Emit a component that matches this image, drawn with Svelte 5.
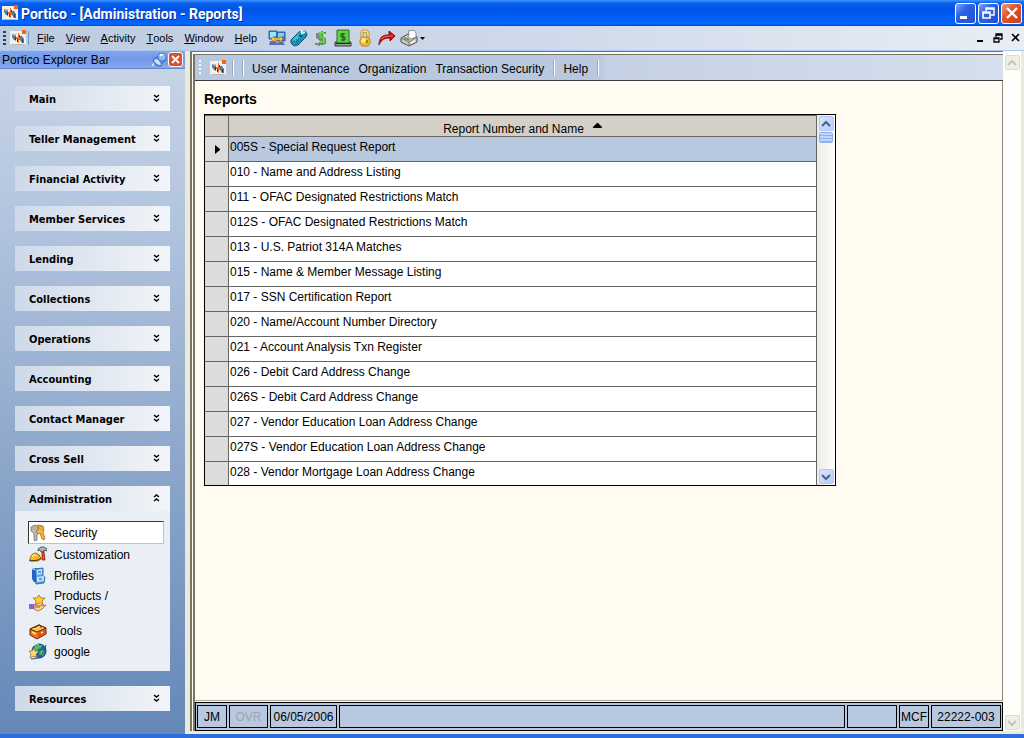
<script>
  const menus = ['File', 'View', 'Activity', 'Tools', 'Window', 'Help'];
  const topGroups = ['Main', 'Teller Management', 'Financial Activity', 'Member Services', 'Lending', 'Collections', 'Operations', 'Accounting', 'Contact Manager', 'Cross Sell'];
  const adminItems = [
    ['keys', 'Security'],
    ['hammer', 'Customization'],
    ['cabinet', 'Profiles'],
    ['star', 'Products / Services'],
    ['toolbox', 'Tools'],
    ['globe', 'google']
  ];
  const reports = [
    '005S - Special Request Report',
    '010 - Name and Address Listing',
    '011 - OFAC Designated Restrictions Match',
    '012S - OFAC Designated Restrictions Match',
    '013 - U.S. Patriot 314A Matches',
    '015 - Name & Member Message Listing',
    '017 - SSN Certification Report',
    '020 - Name/Account Number Directory',
    '021 - Account Analysis Txn Register',
    '026 - Debit Card Address Change',
    '026S - Debit Card Address Change',
    '027 - Vendor Education Loan Address Change',
    '027S - Vendor Education Loan Address Change',
    '028 - Vendor Mortgage Loan Address Change'
  ];
  const tools = ['network', 'phone', 'dollar', 'cash', 'lock', 'arrow', 'printer'];
  let selected = $state(0);
</script>

{#snippet logo()}
  <svg class="logo" width="16" height="16" viewBox="0 0 16 16" aria-hidden="true">
    <path d="M0 1h12v3h4v11H0z" fill="#f1f0ec" />
    <path d="M1 14h14v1H1z" fill="#b4b8bd" />
    <path d="M2 4h3l1 2v4H4L2 7z" fill="#5a7890" />
    <path d="M2 4h3v2H3z" fill="#9db0bf" />
    <path d="M10 6h2l2 3v4h-2l-2-3z" fill="#5a7890" />
    <path d="M5 7l1 1v3L5 10zM12 9l1 1v3l-1-1z" fill="#25333d" />
    <path d="M8 3h1v4h1v3H9v3H8v-2H7V9H6V7h2z" fill="#f2651a" />
    <path d="M7 9h1v3H7zM9 5h1v2H9z" fill="#3d332d" />
    <path d="M12 0h4v4h-4z" fill="#ff6308" />
  </svg>
{/snippet}

{#snippet icon(name)}
  <svg width="18" height="18" viewBox="0 0 18 18" aria-hidden="true">
    {#if name === 'network'}
      <path d="M1 2h8v8H1z" fill="#3d86d4" stroke="#31618f" />
      <path d="M2 3h6v4l-6 2z" fill="#9be4fa" />
      <path d="M9 3h8v9H9z" fill="#2f7bd0" stroke="#31618f" />
      <path d="M10 4h6v3l-6 2z" fill="#7fd2f6" />
      <path d="M2 12h6l2 4H1zM10 13h5l2 3H9z" fill="#6469a8" />
      <path d="M3 10l3-3v2h6V7l3 3-3 3v-2H6v2z" fill="#fcc53b" stroke="#b77c12" stroke-width=".6" />
    {:else if name === 'phone'}
      <path d="M1 11L8 4l3-3 1 2 3-1 2 3-1 3-8 8-4 1-3-3z" fill="#1694bd" stroke="#085677" />
      <path d="M2 11l7-7 4 2-8 7z" fill="#3fbcdc" />
      <path d="M8 7l2-2 3 2-2 2z" fill="#0b617f" />
      <path d="M11 1l1 3 3-1" fill="none" stroke="#e9f6fb" stroke-width="2" />
      <path d="M4 12h1M6 13h1M6 11h1M8 12h1M8 10h1" stroke="#053d55" />
    {:else if name === 'dollar'}
      <path d="M4 4h5v4l3 3v5H8v1H6v-1H3v-2h5v-2L4 9z" fill="#7b8a7e" />
      <path d="M13 5V4H8v3l4 2 1 1v4H7M10 2v14" fill="none" stroke="#3cab35" stroke-width="2" />
      <path d="M12 4H8v3l4 3v3H8" fill="none" stroke="#78de5b" stroke-width="1.300" />
    {:else if name === 'cash'}
      <path d="M1 13h16v4H1z" fill="#9b9f9b" stroke="#363936" />
      <path d="M3 1h12v13H3z" fill="#5fd241" stroke="#286e20" />
      <path d="M2 14.500h14" stroke="#1c2b1a" />
      <path d="M11 5H7v3h4v3H7M9 4v8" fill="none" stroke="#174811" />
    {:else if name === 'lock'}
      <path d="M6 9V4q0-2 3-2t3 3v4" fill="none" stroke="#b98a24" stroke-width="3" />
      <path d="M6 9V4q0-2 3-2t3 3v4" fill="none" stroke="#ffe18a" stroke-width="1.400" />
      <path d="M6 8h6l2 3v3l-2 3H6l-2-3v-3z" fill="#eebc35" stroke="#b78220" />
      <path d="M6 9h3l1 2-2 3-3-1z" fill="#ffe98f" />
      <path d="M10 11h2v3h-2z" fill="#b37f1c" />
    {:else if name === 'arrow'}
      <path d="M1 16q0-11 10-10V2l6 5-5 5V9Q4 8 1 16z" fill="#d40b10" stroke="#8b0d0d" />
      <path d="M3 10q3-3 9-3l3 0" fill="none" stroke="#ff6a5c" />
      <path d="M1 16v-3" stroke="#737373" />
    {:else if name === 'printer'}
      <path d="M1 9l7-4 9 3v5l-8 4-8-4z" fill="#c9c9c5" stroke="#4e4e4d" />
      <path d="M1 9l8 4 8-5M9 13v4" fill="none" stroke="#777" />
      <path d="M8 2l6-1 2 3 0 4-5 2-3-2 1-3z" fill="#fff" stroke="#777" stroke-width=".8" />
      <path d="M4 9l3 1" stroke="#3ea640" stroke-width="1.500" />
      <path d="M7 10l2 1" stroke="#d34b3a" stroke-width="1.500" />
      <path d="M11 14l4-2" fill="none" stroke="#f7f7f3" stroke-width="1.500" />
    {:else if name === 'keys'}
      <path d="M2 3l4-2 3 1-1 5 1 2-1 1v6l-2 1-1-1V9L2 7z" fill="#bdbdb8" stroke="#6b6c6e" stroke-width=".8" />
      <path d="M4 3h2v2H4z" fill="#fff" stroke="#666" stroke-width=".5" />
      <path d="M9 1l5 1 1 4-1 3 2 5-1 2-2-1-2-6-2 1-2-3 3-2z" fill="#f7b638" stroke="#a16b12" stroke-width=".8" />
      <path d="M11 3h2v2h-2z" fill="#fff3c4" stroke="#a16b12" stroke-width=".5" />
    {:else if name === 'hammer'}
      <path d="M9 3l3-2h3l3 2v2l-3-1v2h-3l-1-2-2 1z" fill="#a9b4bb" stroke="#3a4248" stroke-width=".8" />
      <path d="M13 6h2l1 8h-3z" fill="#e1501b" stroke="#8f250b" stroke-width=".8" />
      <path d="M1 13q1-6 6-6 4 1 5 6l-3 2H2z" fill="#f9b925" stroke="#8c5609" stroke-width=".8" />
      <path d="M0 14l2 1 7-1 3-2" stroke="#4a2d02" fill="none" />
      <path d="M3 11q1-2 4-2" stroke="#ffe483" fill="none" stroke-width="1.400" />
    {:else if name === 'cabinet'}
      <path d="M3 2l4-1 3 1v14l-5-1-2-3z" fill="#1f65c2" />
      <path d="M6 2l8-1v8l2 1-1 6-8 1z" fill="#609fe3" stroke="#2258a2" stroke-width=".8" />
      <path d="M8 3l5-1v5l-5 1zM8 10l7-1v5l-7 1z" fill="#bee0fb" />
      <path d="M9 5h3M10 12h3" stroke="#205796" />
      <path d="M3 2l4 1" stroke="#8cc6fa" />
    {:else if name === 'star'}
      <path d="M10 1l2 3h4l-3 3 1 4-4-2-4 2 1-4-3-3h4z" fill="#ffcb36" stroke="#a46e17" stroke-width=".8" />
      <path d="M0 10h5v5H0z" fill="#8a62d4" />
      <path d="M5 11l4 0 2 1 6-1-4 4-4 2-4-2z" fill="#ffd69b" stroke="#a05c18" stroke-width=".8" />
      <path d="M6 13h5" stroke="#9b5a1d" />
    {:else if name === 'toolbox'}
      <path d="M1 7l9-4 7 3v6l-9 5-7-4z" fill="#e6781a" stroke="#6b2607" />
      <path d="M1 7l9-4 7 3-9 4z" fill="#ffc64a" stroke="#6b2607" />
      <path d="M6 6V5l4-2 2 1v2" fill="none" stroke="#5c3414" />
      <path d="M9 11l7-4v5l-7 4z" fill="#e54e1c" />
      <path d="M3 10l4 2M12 11l2-1" stroke="#ffe194" stroke-width="1.500" />
    {:else}
      <circle cx="10" cy="8" r="7" fill="#1569b7" stroke="#123d69" />
      <path d="M8 2h5l-1 3-3 1-2 4-3-2 2-5zM12 7l4 1-2 5-4-2z" fill="#54bd4d" />
      <path d="M5 3q2-2 5-2" stroke="#85e0fd" fill="none" />
      <path d="M5 5l1 3h4l-3 3 1 4-3-2-4 2 1-4-2-3h3z" fill="#ffd97a" stroke="#95672b" stroke-width=".7" />
      <path d="M2 16q12 1 15-14" fill="none" stroke="#3a4d86" />
    {/if}
  </svg>
{/snippet}

{#snippet chevrons(up)}
  <svg width="7" height="8" viewBox="0 0 7 8" aria-hidden="true">
    <path d={up ? 'M1 3l2.500-2 2.500 2M1 7l2.500-2 2.500 2' : 'M1 1l2.500 2 2.500-2M1 5l2.500 2 2.500-2'} fill="none" stroke="#000" stroke-width="1.400" />
  </svg>
{/snippet}

{#snippet arrowhead(up)}
  <svg width="10" height="8" viewBox="0 0 10 8" aria-hidden="true">
    <path d={up ? 'M1 6l4-4 4 4' : 'M1 2l4 4 4-4'} fill="none" stroke="currentColor" stroke-width="2" />
  </svg>
{/snippet}

{#snippet groupHead(name, open)}
  <button class="group-head" aria-expanded={open}>
    <span>{name}</span>
    {@render chevrons(open)}
  </button>
{/snippet}

<div class="window">
  <header class="titlebar">
    {@render logo()}
    <h1>Portico - [Administration - Reports]</h1>
    <div class="window-buttons">
      <button aria-label="Minimize"><svg width="19" height="19" viewBox="0 0 19 19"><path d="M4 12h7v3H4z" fill="#fff" /></svg></button>
      <button aria-label="Restore"><svg width="19" height="19" viewBox="0 0 19 19"><path d="M7 7V4h8v7h-3M7 5h8" fill="none" stroke="#fff" stroke-width="1.400" /><path d="M4 8h7v6H4zM4 9h7" fill="none" stroke="#fff" stroke-width="1.600" /></svg></button>
      <button class="close" aria-label="Close"><svg width="19" height="19" viewBox="0 0 19 19"><path d="M5 4l10 10M15 4L5 14" stroke="#fff" stroke-width="2.400" /></svg></button>
    </div>
  </header>

  <nav class="menubar" aria-label="Menu">
    <span class="grip"></span>
    {@render logo()}
    <span class="divider"></span>
    <div class="menus">
      {#each menus as menu}
        <button><u>{menu[0]}</u>{menu.slice(1)}</button>
      {/each}
    </div>
    <div class="tools">
      {#each tools as tool}
        <button aria-label={tool}>{@render icon(tool)}</button>
      {/each}
      <svg class="more" width="5" height="3" viewBox="0 0 5 3"><path d="M0 0h5L2.500 3z" /></svg>
    </div>
    <div class="child-buttons">
      <button aria-label="Minimize document"><svg width="10" height="10" viewBox="0 0 10 10"><path d="M2 7h6v2H2z" /></svg></button>
      <button aria-label="Restore document"><svg width="10" height="10" viewBox="0 0 10 10"><path d="M3 4V1h6v5H7M3 2h6M1 5h5v4H1zM1 5.500h5" fill="none" stroke="#000" stroke-width="1.300" /></svg></button>
      <button aria-label="Close document"><svg width="10" height="10" viewBox="0 0 10 10"><path d="M1 1l7 7M8 1L1 8" stroke="#000" stroke-width="1.600" /></svg></button>
    </div>
  </nav>

  <div class="body">
    <aside class="explorer">
      <div class="explorer-title">
        <span>Portico Explorer Bar</span>
        <button aria-label="Pin">
          <svg width="16" height="16" viewBox="0 0 16 16">
            <path d="M1 14l4-5" stroke="#dfeaff" stroke-width="1.500" />
            <path d="M2 8q2-4 5-3l2-3 5 1 1 5-4 3-1 3q-6 1-8-6z" fill="#5c8fdc" stroke="#2e5faa" stroke-width=".7" />
            <path d="M3 8q3-2 5 1t2 4q-5 0-7-5z" fill="#cfe3fb" />
            <ellipse cx="11" cy="5" rx="4" ry="4" fill="#8dbaf3" stroke="#3b6cb6" stroke-width=".7" />
            <path d="M9 4q1-2 3-1" stroke="#fff" fill="none" stroke-width="1.800" />
          </svg>
        </button>
        <button class="panel-close" aria-label="Close panel"><svg width="11" height="11" viewBox="0 0 11 11"><path d="M2 2l7 7M9 2L2 9" stroke="#fff" stroke-width="2" /></svg></button>
      </div>
      <div class="groups">
        {#each topGroups as group}
          {@render groupHead(group, false)}
        {/each}
        <section>
          {@render groupHead('Administration', true)}
          <nav class="items" aria-label="Administration">
            {#each adminItems as [glyph, label], i}
              <a href="#{glyph}" class:current={i === 0}>
                {@render icon(glyph)}
                <span>{label}</span>
              </a>
            {/each}
          </nav>
        </section>
        {@render groupHead('Resources', false)}
      </div>
    </aside>

    <div class="workspace">
      <div class="document">
        <nav class="toolbar" aria-label="Administration menu">
          <span class="grip light"></span>
          {@render logo()}
          <span class="divider light"></span>
          <span class="divider light"></span>
          <button>User Maintenance</button>
          <button>Organization</button>
          <button>Transaction Security</button>
          <span class="divider light"></span>
          <button>Help</button>
          <span class="divider light"></span>
        </nav>
        <main>
          <h2>Reports</h2>
          <div class="grid">
            <table>
              <thead>
                <tr>
                  <th class="marker" aria-label="Current row"></th>
                  <th>Report Number and Name<svg width="9" height="5" viewBox="0 0 9 5"><path d="M4 0h1l4 4v1H0V4z" /></svg></th>
                </tr>
              </thead>
              <tbody>
                {#each reports as report, i}
                  <tr class:selected={i === selected} onclick={() => (selected = i)}>
                    <td class="marker">{#if i === selected}<svg width="5" height="9" viewBox="0 0 5 9"><path d="M0 0l5 4v1L0 9z" /></svg>{/if}</td>
                    <td>{report}</td>
                  </tr>
                {/each}
              </tbody>
            </table>
            <div class="scroll">
              <button aria-label="Scroll up">{@render arrowhead(true)}</button>
              <span class="thumb"></span>
              <button class="last" aria-label="Scroll down">{@render arrowhead(false)}</button>
            </div>
          </div>
        </main>
        <footer>
          <span class="user">JM</span>
          <span class="mode">OVR</span>
          <span class="date">06/05/2006</span>
          <span class="message"></span>
          <span class="blank"></span>
          <span class="code">MCF</span>
          <span class="branch">22222-003</span>
        </footer>
      </div>
      <div class="scroll idle">
        <button disabled aria-label="Page up">{@render arrowhead(true)}</button>
        <button disabled class="last" aria-label="Page down">{@render arrowhead(false)}</button>
      </div>
    </div>
  </div>
</div>

<style>
  :global(body) { margin: 0; }
  * { box-sizing: border-box; }
  button {
    font: inherit;
    color: inherit;
    background: none;
    border: 0;
    padding: 0;
    display: flex;
    align-items: center;
    justify-content: center;
    white-space: nowrap;
  }
  svg { flex: none; display: block; }
  .window {
    min-height: 100vh;
    display: flex;
    flex-direction: column;
    font: 12px/14px "Liberation Sans", Arial, sans-serif;
    color: #000;
    background: #ece9d8;
    border-bottom: 4px solid #2a6fdd;
  }
  .titlebar {
    height: 26px;
    display: flex;
    align-items: center;
    padding: 0 2px;
    background: linear-gradient(#3f97ff 0, #0a60ee 3px, #0054e3 10px, #005cf5 15px, #0066ff 24px, #0046c8 26px);
  }
  h1 {
    margin: 0 0 0 3px;
    padding-top: 1px;
    flex: 1;
    font: bold 14px/16px Roboto, sans-serif;
    color: #fff;
    text-shadow: 1px 1px #0a2c8c;
  }
  .window-buttons { display: flex; gap: 2px; }
  .window-buttons button {
    width: 21px;
    height: 21px;
    border: 1px solid #fff;
    border-radius: 3px;
    background: linear-gradient(135deg, #7ea2f4, #2b62e4 40%, #2050d0);
  }
  .window-buttons .close { background: linear-gradient(135deg, #ee9a80, #e0512c 45%, #c9401d); }
  .menubar {
    height: 25px;
    display: flex;
    align-items: center;
    padding: 0 3px;
    background: linear-gradient(90deg, #bccbe0, #d0daea 55%, #e9eef5);
    border-bottom: 1px solid #a9c7f5;
    font-size: 11px;
  }
  .grip {
    width: 3px;
    height: 15px;
    margin-right: 4px;
    background: repeating-linear-gradient(#27416c 0 2px, transparent 2px 4px);
  }
  .grip.light { width: 2px; margin-right: 9px; background: repeating-linear-gradient(#f4f7fb 0 2px, transparent 2px 4px); }
  .divider { width: 1px; height: 14px; background: #6f93c4; margin-left: 2px; }
  .divider.light { width: 2px; height: 16px; margin: 0 4px; background: linear-gradient(90deg, #9fa9b8 50%, #fff 50%); }
  .menus { display: flex; gap: 11px; margin-left: 8px; }
  .tools { display: flex; align-items: center; gap: 4px; margin-left: 11px; }
  .more { margin-left: -2px; }
  .child-buttons { display: flex; gap: 8px; margin-left: auto; }
  .body { flex: 1; display: grid; grid-template-columns: 185px minmax(0, 1fr); }
  .explorer {
    display: flex;
    flex-direction: column;
    background: linear-gradient(#c9d6e7, #b2c4de 25%, #88a3c8 65%, #6488b8);
  }
  .explorer-title {
    height: 18px;
    display: flex;
    align-items: center;
    padding: 0 2px;
    background: linear-gradient(#83a6eb, #7299e6 50%, #86a8ec);
    border-bottom: 1px solid #6386cb;
  }
  .explorer-title span { flex: 1; }
  .panel-close {
    width: 15px;
    height: 15px;
    margin-left: 1px;
    border: 1px solid #fff;
    border-radius: 3px;
    background: #d8502f;
  }
  .groups { display: flex; flex-direction: column; gap: 15px; padding: 17px 15px 23px; }
  .group-head {
    width: 100%;
    height: 25px;
    padding: 2px 10px 0 14px;
    justify-content: space-between;
    background: linear-gradient(90deg, #ced9e9, #dfe6f0 45%, #f2f5f9);
    font: bold 11px/14px "DejaVu Sans Condensed", "DejaVu Sans", sans-serif;
  }
  .group-head svg { margin-bottom: 3px; }
  .items { display: flex; flex-direction: column; background: #e9eff4; padding: 10px 6px 9px 13px; }
  .items a {
    display: flex;
    align-items: center;
    gap: 6px;
    min-height: 21px;
    padding: 1px 24px 1px 1px;
    color: inherit;
    text-decoration: none;
  }
  .items span { padding-left: 1px; }
  .items a:nth-child(4) { min-height: 34px; }
  .items a.current { min-height: 23px; background: #fff; border: 1px solid #b2c5df; border-top-color: #333; border-left-color: #333; padding-left: 0; }
  .workspace {
    display: flex;
    border-left: 5px solid #ece9d8;
    padding-right: 3px;
    padding-bottom: 3px;
  }
  .document {
    flex: 1;
    min-width: 0;
    display: flex;
    flex-direction: column;
    border: solid #77746a;
    border-width: 4px 0 0 5px;
    border-style: double;
    background: #fffbf0;
  }
  .toolbar {
    height: 26px;
    display: flex;
    align-items: center;
    padding: 0 4px;
    background: linear-gradient(90deg, #b8c8de 0, #b8c8de 50%, #c5d1e4 51%, #d5dfed);
    border-bottom: 1px solid #3c3c40;
  }
  .toolbar .logo { margin-right: 2px; }
  .toolbar button { padding: 3px 5px 0 4px; }
  main {
    flex: 1;
    padding: 9px;
    border-right: 1px solid #8d8b82;
    border-bottom: 1px solid #aaa79c;
  }
  h2 { margin: 0 0 6px; font: bold 14px/18px "Liberation Sans", Arial, sans-serif; }
  .grid { display: flex; max-width: 632px; border: 1px solid #000; background: #fff; }
  table { flex: 1; border-spacing: 0; border-top: 1px solid #666; }
  th, td { height: 25px; padding: 0 1px 4px; border-right: 1px solid #666; border-bottom: 1px solid #666; text-align: left; }
  th { height: 21px; padding: 6px 0 0; line-height: 14px; font-weight: 400; text-align: center; background: #d4d0c8; }
  th svg { display: inline-block; margin: 0 0 5px 9px; }
  tbody tr:last-child td { height: 23px; border-bottom: 0; }
  .marker { width: 24px; }
  td.marker { background: #dcdcdc; padding: 0 0 0 10px; }
  .selected td:last-child { background: #b8c8de; }
  .scroll {
    width: 18px;
    display: flex;
    flex-direction: column;
    align-items: center;
    padding: 1px;
    gap: 1px;
    color: #4d6185;
    background: linear-gradient(90deg, #eeede5, #fefefb);
  }
  .scroll button { width: 15px; height: 15px; border: 1px solid #b5c8f0; border-radius: 2px; background: linear-gradient(135deg, #dae6fe, #b5ccfa); }
  .scroll .last { margin-top: auto; }
  .thumb { width: 14px; height: 11px; border: 1px solid #8eb0f0; border-radius: 2px; background: repeating-linear-gradient(#c4d6fc 0 2px, #8cb0f5 2px 3px); }
  .idle { padding-top: 4px; color: #c5c3b8; background: #fefefb; }
  .idle button { border-color: #dddbd0; background: #f0efe6; }
  footer {
    display: flex;
    gap: 2px;
    height: 29px;
    padding: 2px 1px;
    background: #b8c8de;
    border: 1px solid #000;
    margin-top: 1px;
  }
  footer span { width: 30px; border: 1px solid #000; display: flex; align-items: center; justify-content: center; }
  footer .mode { width: 39px; color: #a0a4aa; }
  footer .date { width: 67px; }
  footer .message { flex: 1; }
  footer .blank { width: 50px; }
  footer .branch { width: 70px; }
</style>
